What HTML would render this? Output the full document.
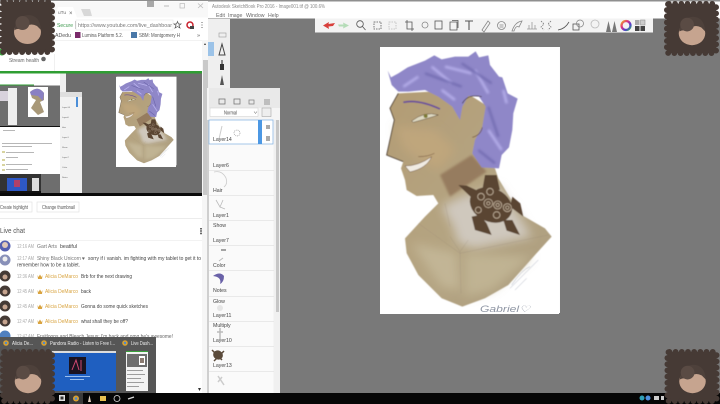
<!DOCTYPE html>
<html><head><meta charset="utf-8"><style>
html,body{margin:0;padding:0;background:#797979;width:720px;height:404px;overflow:hidden}
svg{display:block;filter:blur(.35px)}
text{font-family:"Liberation Sans",sans-serif}
</style></head><body>
<svg width="720" height="404" viewBox="0 0 720 404" xmlns="http://www.w3.org/2000/svg">
<defs>
<symbol id="av" viewBox="0 0 56 56" overflow="visible">
<rect x="3" y="3" width="50" height="50" rx="2" fill="#463a35" stroke="#463a35" stroke-width="6" stroke-linecap="round" stroke-dasharray="0 6.300"/>
<ellipse cx="28.500" cy="33" rx="13.500" ry="12" fill="#c6a48f"/>
<path d="M15.500 31 Q17 17 29 16 Q41 16 42 31 L38 27 Q32 24 28 27 Q24 30 18 30Z" fill="#4e413b"/>
<circle cx="23.500" cy="24" r="7" fill="#5a4b44"/>
</symbol>
<filter id="b1" x="-30%" y="-30%" width="160%" height="160%"><feGaussianBlur stdDeviation="14"/></filter>
<filter id="b2" x="-30%" y="-30%" width="160%" height="160%"><feGaussianBlur stdDeviation="3"/></filter>
<filter id="b0" x="-5%" y="-5%" width="110%" height="110%"><feGaussianBlur stdDeviation="1.800"/></filter>
<linearGradient id="sk" x1="0" y1="0" x2="1" y2="1"><stop offset="0" stop-color="#b39c74"/><stop offset=".55" stop-color="#b5a583"/><stop offset="1" stop-color="#ad9e80"/></linearGradient>
<linearGradient id="rb" x1="0" y1="0" x2="1" y2="1"><stop offset="0" stop-color="#f0b020"/><stop offset=".35" stop-color="#e03080"/><stop offset=".7" stop-color="#5040d0"/><stop offset="1" stop-color="#30b060"/></linearGradient>
<g id="paint">
<rect width="540" height="798" x="15" y="21" fill="#fff"/>
<g filter="url(#b0)">
<path d="M70 160 L45 205 L58 240 L35 345 L85 365 L78 385 L90 420 L95 450 L125 468 L175 465 L190 490 L150 530 L90 595 L95 640 L130 705 L200 775 L262 800 L330 775 L400 735 L480 645 L530 590 L510 565 L440 525 L400 465 L370 415 L360 385 L320 370 L340 200 L260 150 Z" fill="url(#sk)"/>
<path d="M235 560 L200 500 L260 470 L370 440 L440 540 L470 590 L300 625 L250 610Z" fill="#cfc8bd" filter="url(#b1)"/>
<path d="M110 610 L245 640 L255 750 L200 740 Z" fill="#c2b595" filter="url(#b1)"/>
<path d="M270 640 L470 650 L350 750 L270 770 Z" fill="#c0b393" filter="url(#b1)"/>
<path d="M60 260 L180 270 L240 330 L190 390 L90 330Z" fill="#bfa67c" filter="url(#b1)"/>
<path d="M195 405 L290 345 L335 395 L225 470 Z" fill="#8d6f55" opacity=".75" filter="url(#b2)"/>
<path d="M70 160 L45 205 L58 240 L35 345 L85 365" fill="none" stroke="#33241b" stroke-width="2.500"/>
<path d="M85 187 Q130 177 195 207" fill="none" stroke="#6b4f9a" stroke-width="5"/>
<path d="M110 243 Q150 212 190 225 Q160 235 115 247Z" fill="#ded9c2" stroke="#4f3a26" stroke-width="1.500"/>
<circle cx="152" cy="228" r="6" fill="#7d7a35"/>
<path d="M90 378 Q130 378 170 350 Q155 385 105 396Z" fill="#f0ebe2" stroke="#6a4a36" stroke-width="1.500"/>
<path d="M130 350 Q160 350 178 340" stroke="#6a4a36" fill="none" stroke-width="1.500"/>
<path d="M38 92 L48 112 L70 100 L98 82 L150 62 L178 46 L200 58 L240 50 L280 50 L302 34 L312 52 L340 46 L345 75 L372 110 L382 112 L398 160 L428 176 L415 220 L412 270 L402 322 L380 345 L372 385 L320 382 L292 340 L300 300 L322 260 L332 200 L312 170 L280 168 L262 200 L255 240 L232 200 L190 170 L150 150 L100 155 L70 155 L50 135Z" fill="#8f87c8"/>
<path d="M85 140 L130 110 M200 150 L240 180 M210 80 L290 100 M300 90 L340 160 M385 150 L395 190 M340 270 L380 330 M170 80 L230 130" stroke="#b9b2ee" stroke-width="7" fill="none" filter="url(#b2)"/>
<path d="M150 100 L260 140 M260 70 L350 130 M340 200 L370 290 M310 330 L360 370" stroke="#6e67ad" stroke-width="6" fill="none" filter="url(#b2)"/>
<path d="M262 190 Q280 160 320 170" fill="none" stroke="#3a2a20" stroke-width="2"/>
<path d="M322 262 Q318 285 292 292" fill="none" stroke="#6a4a36" stroke-width="2"/>
<g fill="#5a4433">
<ellipse cx="348" cy="495" rx="66" ry="50" transform="rotate(25 348 495)"/>
<path d="M295 478 L250 435 L275 437 L325 460Z"/><path d="M290 530 L300 570 L350 585 L335 550 L315 525Z"/><path d="M385 540 L395 572 L435 585 L412 540Z"/><path d="M405 500 L445 530 L436 490 L412 470Z"/><path d="M322 450 L330 405 L365 405 L375 450Z"/>
</g>
<g fill="none" stroke="#c0b09a" stroke-width="2.500"><circle cx="340" cy="490" r="13"/><circle cx="340" cy="490" r="5"/><circle cx="368" cy="495" r="12"/><circle cx="368" cy="495" r="5"/><circle cx="397" cy="503" r="12"/><circle cx="397" cy="503" r="5"/><circle cx="318" cy="470" r="10"/><circle cx="365" cy="525" r="10"/><circle cx="345" cy="455" r="10"/><circle cx="310" cy="510" r="9"/></g>
<path d="M225 590 L255 635 L280 600 M255 635 L258 760 M130 550 L255 640 L520 585 M210 490 L225 560" fill="none" stroke="#8b7f70" stroke-width="1.200" opacity=".45"/>
<path d="M405 745 L490 660 M410 735 Q440 690 465 680 M420 750 L455 715" fill="none" stroke="#aab0c0" stroke-width="1.500"/>
</g>
</g>
</defs>

<rect width="720" height="404" fill="#797979"/>
<!-- sketchbook title -->
<rect x="208" y="1" width="512" height="17.500" fill="#fff"/>
<rect x="0" y="0" width="720" height="1.500" fill="#8f8f8f"/>
<text x="212" y="8" font-size="5.200" fill="#8a8a8a" textLength="113" lengthAdjust="spacingAndGlyphs">Autodesk SketchBook Pro 2016 - Image001.tif @ 100.6%</text>
<g font-size="5.200" fill="#666"><text x="216" y="17">Edit</text><text x="228" y="17">Image</text><text x="246" y="17">Window</text><text x="268" y="17">Help</text></g>
<!-- toolbar -->
<rect x="315" y="18.500" width="338" height="14" fill="#f3f3f3"/>
<g transform="translate(310 15)">
<path d="M13 10.500 L19 7 L18.500 9 L25 8 L23 11 L18.500 11.500 L19 14Z" fill="#d8403c"/>
<path d="M39 10.500 L33 7.500 L33.500 9.500 L28 9.500 L29 11.500 L33.500 11.500 L33 13.500Z" fill="#b5dcb8"/>
<g fill="none" stroke="#555" stroke-width=".8">
<circle cx="50" cy="9" r="3.300"/><path d="M52.500 11.500 L55.500 15"/>
<rect x="64" y="7" width="7" height="7" stroke-dasharray="1.500 1"/><rect x="79" y="7" width="7" height="7" stroke-dasharray="1.500 1" stroke="#bbb"/>
<path d="M97 5 V14 H104 M95 7 H102 V16"/>
<circle cx="115" cy="10" r="3" stroke="#888"/>
<rect x="125" y="6" width="7" height="8"/><path d="M140 7 H147 V15 H140Z M142 5.500 H148 V13"/>
<path d="M155 6 H163 M159 6 V15" stroke-width="1.100"/>
<path d="M172 15 L178 6 L180 8 L174 17Z" stroke="#888"/><circle cx="191.500" cy="10.500" r="4" stroke="#888"/><path d="M189.500 10H193.500M189.500 12H193.500" stroke="#888"/>
<path d="M202 16 Q205 7 212 6 L209 12 Q206 10 204 16Z" stroke="#888"/>
<path d="M217 14 H227 M219 14 V10 M222 14 V7 M225 14 V10" stroke="#999"/>
<path d="M231 6 L234 9 L231 12 L234 15 M241 6 L238 9 L241 12 L238 15" stroke="#777" stroke-dasharray="1.500 1"/>
<path d="M248 15 Q255 14 259 7"/><rect x="263" y="9" width="6" height="6"/><circle cx="270" cy="8.500" r="3.500" stroke="#888"/>
<circle cx="285" cy="9" r="4" stroke="#bbb"/>
</g>
<path d="M296 17 L298.500 6 L301 17Z M302 17 L304.500 6 L307 17Z" fill="#777"/>
<circle cx="316" cy="10.500" r="4.500" fill="none" stroke="url(#rb)" stroke-width="2.300"/>
<rect x="325" y="5" width="4.500" height="5" fill="#aaa"/><rect x="330.500" y="5" width="4.500" height="5" fill="#ccc" stroke="#888" stroke-width=".5"/><rect x="325" y="11" width="4.500" height="5" fill="#444"/><rect x="330.500" y="11" width="4.500" height="5" fill="#444"/>
</g>
<!-- canvas painting -->
<rect x="380" y="47" width="179" height="267" fill="#fff"/>
<g transform="translate(375 40) scale(.3333)"><use href="#paint"/></g>
<text x="480" y="312" font-size="9" fill="#8e95a3" textLength="50" lengthAdjust="spacingAndGlyphs" font-style="italic">Gabriel♡</text>

<!-- toolbox -->
<rect x="208" y="19" width="22" height="69" fill="#efefef"/>
<rect x="208" y="42" width="6" height="14" fill="#9cc3e8"/>
<g fill="#555"><path d="M219 55 L222 44 L225 55Z" fill="none" stroke="#444" stroke-width="1"/><rect x="220" y="64" width="4" height="6" fill="#333"/><rect x="221" y="60" width="2" height="4" fill="#888"/><path d="M220 85 L222 75 L224 85Z"/><rect x="219" y="33" width="7" height="4" fill="none" stroke="#999" stroke-width=".6"/></g>

<!-- browser -->
<rect x="0" y="1" width="208" height="71" fill="#fff"/>
<rect x="0" y="1.500" width="208" height="16" fill="#f8f8f8"/>
<path d="M55 17.500 L58 7 L73 7 L77 17.500Z" fill="#fff"/>
<path d="M81 9 L90 9 L92 16 L84 16Z" fill="#d8d8d8"/>
<text x="58" y="14" font-size="4.800" fill="#666">uTu</text><text x="69" y="15" font-size="6" fill="#666">×</text>
<rect x="147" y="1" width="7" height="6" fill="#a8a8a8"/>
<path d="M164 6 H169" stroke="#bbb"/><rect x="180" y="3.500" width="4.500" height="4.500" fill="none" stroke="#bbb" stroke-width=".7"/><path d="M198 3.500 L203 8 M203 3.500 L198 8" stroke="#bbb" stroke-width=".8"/>
<rect x="76" y="20" width="97" height="10" fill="#fff" stroke="#e4e4e4" stroke-width=".5"/>
<text x="57" y="27" font-size="5.200" fill="#3f9a50" textLength="16" lengthAdjust="spacingAndGlyphs">Secure</text><rect x="75" y="21" width=".7" height="8" fill="#bbb"/>
<text x="78" y="27" font-size="5.600" fill="#777" textLength="94" lengthAdjust="spacingAndGlyphs">https://www.youtube.com/live_dashboar</text>
<path d="M177.500 21.500 L178.500 24 L181 24 L179 25.500 L180 28 L177.500 26.500 L175 28 L176 25.500 L174 24 L176.500 24Z" fill="none" stroke="#555" stroke-width=".7"/>
<circle cx="190" cy="25" r="3" fill="none" stroke="#c8202c" stroke-width="1.500"/><rect x="190" y="26" width="4" height="3" fill="#444"/>
<path d="M202 22 V28" stroke="#666" stroke-dasharray="1 1.500"/>
<text x="55" y="37" font-size="5.200" fill="#555" textLength="16" lengthAdjust="spacingAndGlyphs">ADedu</text>
<rect x="75" y="32" width="5.500" height="6" fill="#7a2a6a"/><text x="82" y="37" font-size="5.200" fill="#555" textLength="41" lengthAdjust="spacingAndGlyphs">Lumina Platform 5.2.</text>
<rect x="131" y="32" width="6" height="6" fill="#4a78a8"/><text x="139" y="37" font-size="5.200" fill="#555" textLength="41" lengthAdjust="spacingAndGlyphs">SBM: Montgomery H</text>
<text x="197" y="37" font-size="5.500" fill="#555">»</text>
<rect x="0" y="40" width="202" height=".5" fill="#e5e5e5"/>
<text x="9" y="62" font-size="5.400" fill="#666" textLength="30" lengthAdjust="spacingAndGlyphs">Stream health</text><circle cx="43.500" cy="59" r="2.300" fill="#666"/>
<rect x="54" y="54" width=".5" height="18" fill="#e2e2e2"/>
<rect x="0" y="71" width="202" height="2.500" fill="#2f9e33"/>
<circle cx="2" cy="52" r="3.500" fill="#3aa53c"/>
<!-- video -->
<rect x="0" y="73.500" width="202" height="120" fill="#6e6e6e"/>
<rect x="116" y="77" width="60" height="90" fill="#fff"/>
<g transform="translate(116.500 76) scale(.1111)"><use href="#paint" x="-15" y="-15"/></g>
<!-- nested -->
<rect x="0" y="73.500" width="66" height="12" fill="#fff"/>
<rect x="60" y="73.500" width="6" height="20" fill="#efefef"/>
<rect x="0" y="84.500" width="34" height="1" fill="#2f9e33"/>
<rect x="0" y="85.500" width="60" height="41" fill="#6e6e6e"/>
<rect x="0" y="91" width="8" height="10" fill="#d8d2dc"/><rect x="8" y="88" width="9" height="37" fill="#eee"/>
<rect x="28" y="87" width="20" height="30" fill="#fff"/>
<path d="M30 92 Q38 85 44 93 L44 100 L40 102 L44 112 L38 115 L31 108 L36 100 L32 98Z" fill="#a89878"/><path d="M30 92 Q38 85 44 93 L43 101 L38 96 L31 95Z" fill="#8a80c2"/>
<rect x="0" y="126" width="60" height="1.200" fill="#111"/>
<rect x="0" y="127" width="60" height="47" fill="#fff"/>
<rect x="60" y="92" width="22" height="101" fill="#f2f2f2"/>
<rect x="60" y="92" width="22" height="5" fill="#dfdfdf"/>
<rect x="76" y="97" width="2" height="10" fill="#4c8fd8"/>
<g font-size="2.200" fill="#666"><text x="62" y="108">Layer14</text><text x="62" y="118">Layer6</text><text x="62" y="128">Hair</text><text x="62" y="138">Layer1</text><text x="62" y="148">Show</text><text x="62" y="158">Layer7</text><text x="62" y="168">Color</text><text x="62" y="178">Notes</text></g>
<g fill="#d8d4a0"><rect x="2" y="151" width="3" height="2"/><rect x="2" y="159" width="3" height="2"/><rect x="2" y="164" width="3" height="2"/><rect x="2" y="169" width="3" height="2"/></g>
<g fill="#999" opacity=".7"><rect x="3" y="130" width="12" height="1"/><rect x="2" y="143" width="50" height="1"/><rect x="2" y="146" width="30" height="1"/><rect x="6" y="152" width="28" height="1"/><rect x="6" y="157" width="12" height="1"/><rect x="6" y="164" width="26" height="1"/><rect x="6" y="169" width="22" height="1"/></g>
<rect x="0" y="174" width="41" height="19" fill="#333"/><rect x="7" y="178" width="20" height="13" fill="#2e58c4"/><rect x="14" y="180" width="6" height="7" fill="#b04068"/><rect x="32" y="178" width="7" height="13" fill="#ddd"/><rect x="0" y="191" width="41" height="2" fill="#111"/>
<rect x="0" y="193" width="202" height="3" fill="#0a0a0a"/>
<!-- page below -->
<rect x="0" y="196" width="202" height="197" fill="#fff"/>
<rect x="-3" y="202" width="35" height="10" fill="#fff" stroke="#dedede" stroke-width=".6"/>
<rect x="37" y="202" width="42" height="10" fill="#fff" stroke="#dedede" stroke-width=".6"/>
<text x="0" y="209" font-size="5" fill="#555" textLength="28" lengthAdjust="spacingAndGlyphs">Create highlight</text><text x="42" y="209" font-size="5" fill="#555" textLength="33" lengthAdjust="spacingAndGlyphs">Change thumbnail</text>
<rect x="0" y="218" width="202" height="1" fill="#ececec"/>
<text x="0" y="233" font-size="7.500" fill="#555" textLength="25" lengthAdjust="spacingAndGlyphs">Live chat</text>
<path d="M201 228 V235" stroke="#333" stroke-width="1.500" stroke-dasharray="1.500 .8"/>
<rect x="0" y="240" width="202" height=".6" fill="#eaeaea"/>
<circle cx="5" cy="246" r="5.500" fill="#5560b0"/><circle cx="5" cy="245" r="3" fill="#e0c8b8"/>
<circle cx="5" cy="260" r="5.500" fill="#8890b8"/><circle cx="5" cy="259" r="2.500" fill="#eee"/>
<g fill="#453a35"><circle cx="5" cy="276" r="5.500"/><circle cx="5" cy="291" r="5.500"/><circle cx="5" cy="306" r="5.500"/><circle cx="5" cy="321" r="5.500"/></g>
<g fill="#c6a48f"><circle cx="5" cy="277" r="2.500"/><circle cx="5" cy="292" r="2.500"/><circle cx="5" cy="307" r="2.500"/><circle cx="5" cy="322" r="2.500"/></g>
<circle cx="5" cy="336" r="5.500" fill="#5080c0"/>
<g font-size="5" lengthAdjust="spacingAndGlyphs">
<g fill="#aaa"><text x="17" y="248" textLength="17" lengthAdjust="spacingAndGlyphs">12:16 AM</text><text x="17" y="260" textLength="17" lengthAdjust="spacingAndGlyphs">12:17 AM</text><text x="17" y="278" textLength="17" lengthAdjust="spacingAndGlyphs">12:36 AM</text><text x="17" y="293" textLength="17" lengthAdjust="spacingAndGlyphs">12:45 AM</text><text x="17" y="308" textLength="17" lengthAdjust="spacingAndGlyphs">12:45 AM</text><text x="17" y="323" textLength="17" lengthAdjust="spacingAndGlyphs">12:47 AM</text><text x="17" y="338" textLength="17" lengthAdjust="spacingAndGlyphs">12:47 AM</text></g>
<text x="37" y="248" fill="#777" textLength="20" lengthAdjust="spacingAndGlyphs">Gart Arts</text><text x="60" y="248" fill="#444" textLength="17" lengthAdjust="spacingAndGlyphs">beatiful</text>
<text x="37" y="260" fill="#777" textLength="44" lengthAdjust="spacingAndGlyphs">Shiny Black Unicorn</text><text x="82" y="260" fill="#666">♥</text><text x="88" y="260" fill="#444" textLength="113" lengthAdjust="spacingAndGlyphs">sorry if i vanish. im fighting with my tablet to get it to</text>
<text x="17" y="266.500" fill="#444" textLength="63" lengthAdjust="spacingAndGlyphs">remember how to be a tablet.</text>
<g fill="#d9a441"><text x="45" y="278" textLength="33" lengthAdjust="spacingAndGlyphs">Alicia DeMarco</text><text x="45" y="293" textLength="33" lengthAdjust="spacingAndGlyphs">Alicia DeMarco</text><text x="45" y="308" textLength="33" lengthAdjust="spacingAndGlyphs">Alicia DeMarco</text><text x="45" y="323" textLength="33" lengthAdjust="spacingAndGlyphs">Alicia DeMarco</text></g>
<g fill="#444"><text x="81" y="278" textLength="51" lengthAdjust="spacingAndGlyphs">Brb for the next drawing</text><text x="81" y="293" textLength="10" lengthAdjust="spacingAndGlyphs">back</text><text x="81" y="308" textLength="67" lengthAdjust="spacingAndGlyphs">Gonna do some quick sketches</text><text x="81" y="323" textLength="47" lengthAdjust="spacingAndGlyphs">what shall they be off?</text></g>
<text x="37" y="338" fill="#666" textLength="136" lengthAdjust="spacingAndGlyphs">Fruitloops and Bleach Jesus: I'm back and omg he's awesome!</text>
</g>
<g fill="#d9a441"><path d="M37.500 275 L38.500 277 L40 274.500 L41.500 277 L42.500 275 L42 279 H38Z"/><path d="M37.500 290 L38.500 292 L40 289.500 L41.500 292 L42.500 290 L42 294 H38Z"/><path d="M37.500 305 L38.500 307 L40 304.500 L41.500 307 L42.500 305 L42 309 H38Z"/><path d="M37.500 320 L38.500 322 L40 319.500 L41.500 322 L42.500 320 L42 324 H38Z"/></g>
<!-- browser scrollbar -->
<rect x="202" y="40" width="6" height="353" fill="#f6f6f6"/>
<rect x="203" y="60" width="5" height="135" fill="#c9c9c9"/>
<path d="M204 45 L205 43 L206 45Z M198 388 L201 388 L199.500 391Z" fill="#333"/>
<!-- layers panel -->
<rect x="207" y="88" width="73" height="305" fill="#f5f5f5"/>
<rect x="207" y="120" width="2" height="273" fill="#cfcfcf"/>
<rect x="209" y="88" width="71" height="20" fill="#e9e9e9"/>
<g fill="none" stroke="#777" stroke-width=".8"><rect x="219" y="99" width="6" height="5"/><rect x="234" y="99" width="6" height="5"/><rect x="249" y="100" width="5" height="4" stroke="#888"/><path d="M264 100 H270 M264 102 H270 M264 104 H270"/></g>
<rect x="210" y="108" width="48" height="8.500" fill="#fff" stroke="#ccc" stroke-width=".5"/>
<rect x="262" y="108" width="9" height="8.500" fill="#eee" stroke="#999" stroke-width=".5"/>
<text x="224" y="114.500" font-size="5" fill="#444" textLength="13" lengthAdjust="spacingAndGlyphs">Normal</text><path d="M254 111.500 L255.500 113.500 L257 111.500" fill="none" stroke="#555" stroke-width=".5"/>
<rect x="209" y="120" width="64" height="273" fill="#fafafa"/>
<rect x="209" y="120" width="64" height="24" fill="#fff" stroke="#7fb0e0" stroke-width=".7"/>
<rect x="258" y="120" width="4" height="24" fill="#4c98e4"/>
<circle cx="237" cy="133" r="3" fill="none" stroke="#888" stroke-width=".6" stroke-dasharray="1 .8"/>
<path d="M222 126 L219 139" stroke="#ccc"/>
<rect x="266" y="125" width="4" height="4" fill="#aaa"/><rect x="266" y="136" width="4" height="5" fill="#aaa"/>
<rect x="274" y="120" width="6" height="273" fill="#f0f0f0"/><rect x="276" y="120" width="3" height="192" fill="#c6c6c6"/>
<g fill="#e2e2e2"><rect x="209" y="170" width="65" height=".7"/><rect x="209" y="195" width="65" height=".7"/><rect x="209" y="220" width="65" height=".7"/><rect x="209" y="245" width="65" height=".7"/><rect x="209" y="270" width="65" height=".7"/><rect x="209" y="296" width="65" height=".7"/><rect x="209" y="321" width="65" height=".7"/><rect x="209" y="346" width="65" height=".7"/><rect x="209" y="371" width="65" height=".7"/></g>
<g font-size="5.200" fill="#444"><text x="213" y="141">Layer14</text><text x="213" y="167">Layer6</text><text x="213" y="192">Hair</text><text x="213" y="217">Layer1</text><text x="213" y="227">Show</text><text x="213" y="242">Layer7</text><text x="213" y="267">Color</text><text x="213" y="292">Notes</text><text x="213" y="303">Glow</text><text x="213" y="317">Layer11</text><text x="213" y="327">Multiply</text><text x="213" y="342">Layer10</text><text x="213" y="367">Layer13</text></g>
<path d="M214 172 Q222 170 226 178 Q228 184 224 187" fill="none" stroke="#ccc" stroke-width=".8"/>
<path d="M216 200 L220 207 L223 200 M220 207 L225 209" fill="none" stroke="#bbb" stroke-width=".8"/>
<path d="M221 250 H226" stroke="#888" stroke-width="1.500"/><path d="M219 261 L223 258" stroke="#bbb"/>
<path d="M213 276 Q220 271 224 276 Q224 282 220 284 Q222 277 213 276Z" fill="#6a62a8"/>
<circle cx="220" cy="308" r="3" fill="#e6e6e6"/><path d="M220 328 V340 M217 332 H223" stroke="#bbb" stroke-width="1.500"/>
<ellipse cx="218" cy="355" rx="5" ry="4.500" fill="#5a4a3a" transform="rotate(30 218 355)"/><path d="M212 350 L222 360 M224 351 L214 361" stroke="#5a4a3a" stroke-width="1.500"/>
<path d="M218 376 L224 385 M222 377 L218 382" stroke="#ccc" stroke-width="1.500"/>
<!-- taskbar -->
<rect x="0" y="393" width="720" height="11" fill="#060606"/>
<rect x="69" y="393" width="14" height="11" fill="#3b3b3b"/>
<rect x="59" y="395" width="6" height="6" fill="#ddd"/><rect x="60.500" y="396.500" width="3" height="3" fill="#333"/>
<circle cx="76" cy="398.500" r="3" fill="#d8a030"/><circle cx="76" cy="398.500" r="1.300" fill="#4a88d0"/>
<path d="M88 402 L89.500 395 L91 402Z" fill="#e0d0c0"/><rect x="100" y="396" width="6" height="5" fill="#e8c050"/>
<circle cx="117" cy="398.500" r="3" fill="none" stroke="#ddd" stroke-width=".8"/><path d="M128 399 L134 397" stroke="#ddd" stroke-width="1.200"/>
<circle cx="642" cy="398" r="2.500" fill="#30a0b8"/><circle cx="648" cy="398" r="2.500" fill="#5090e0"/><rect x="654" y="396" width="5" height="4" fill="#ccc"/><rect x="661" y="396" width="3" height="4" fill="#ccc"/>
<!-- preview -->
<rect x="0" y="337" width="156" height="56" fill="#565656"/>
<g font-size="5" fill="#eee"><text x="12" y="345" textLength="21" lengthAdjust="spacingAndGlyphs">Alicia De...</text><text x="50" y="345" textLength="65" lengthAdjust="spacingAndGlyphs">Pandora Radio - Listen to Free I...</text><text x="131" y="345" textLength="22" lengthAdjust="spacingAndGlyphs">Live Dash...</text></g>
<g><circle cx="6" cy="343" r="2.800" fill="#d8a030"/><circle cx="6" cy="343" r="1.200" fill="#4a88d0"/><circle cx="44" cy="343" r="2.800" fill="#d8a030"/><circle cx="44" cy="343" r="1.200" fill="#4a88d0"/><circle cx="125" cy="343" r="2.800" fill="#d8a030"/><circle cx="125" cy="343" r="1.200" fill="#4a88d0"/></g>
<rect x="52" y="351" width="64" height="40" fill="#1f5fc0"/><rect x="52" y="351" width="64" height="2" fill="#ddd"/>
<rect x="69" y="357" width="17" height="17" fill="#1a1320"/><path d="M72 370 L76 360 L79 370 M81 360 V371" stroke="#d04870" fill="none"/>
<rect x="65" y="376" width="25" height="1" fill="#9cc0ee"/><rect x="70" y="379" width="14" height="1" fill="#9cc0ee"/>
<rect x="126" y="351" width="22" height="40" fill="#f3f3f3"/><rect x="126" y="351" width="22" height="1" fill="#38a03a"/>
<rect x="127" y="354" width="20" height="13" fill="#6e6e6e"/><rect x="139" y="356" width="6" height="9" fill="#fff"/><rect x="140" y="358" width="4" height="5" fill="#8a7a70"/>
<g fill="#888"><rect x="127" y="370" width="16" height=".8"/><rect x="127" y="374" width="18" height=".8"/><rect x="127" y="378" width="14" height=".8"/><rect x="127" y="382" width="17" height=".8"/><rect x="127" y="386" width="12" height=".8"/></g>
<!-- avatars -->
<use href="#av" x="-1" y="-1" width="56" height="56"/>
<use href="#av" x="664" y="1" width="55" height="55"/>
<use href="#av" x="0" y="349" width="55" height="55"/>
<use href="#av" x="664" y="349" width="56" height="55"/>
</svg>
</body></html>
